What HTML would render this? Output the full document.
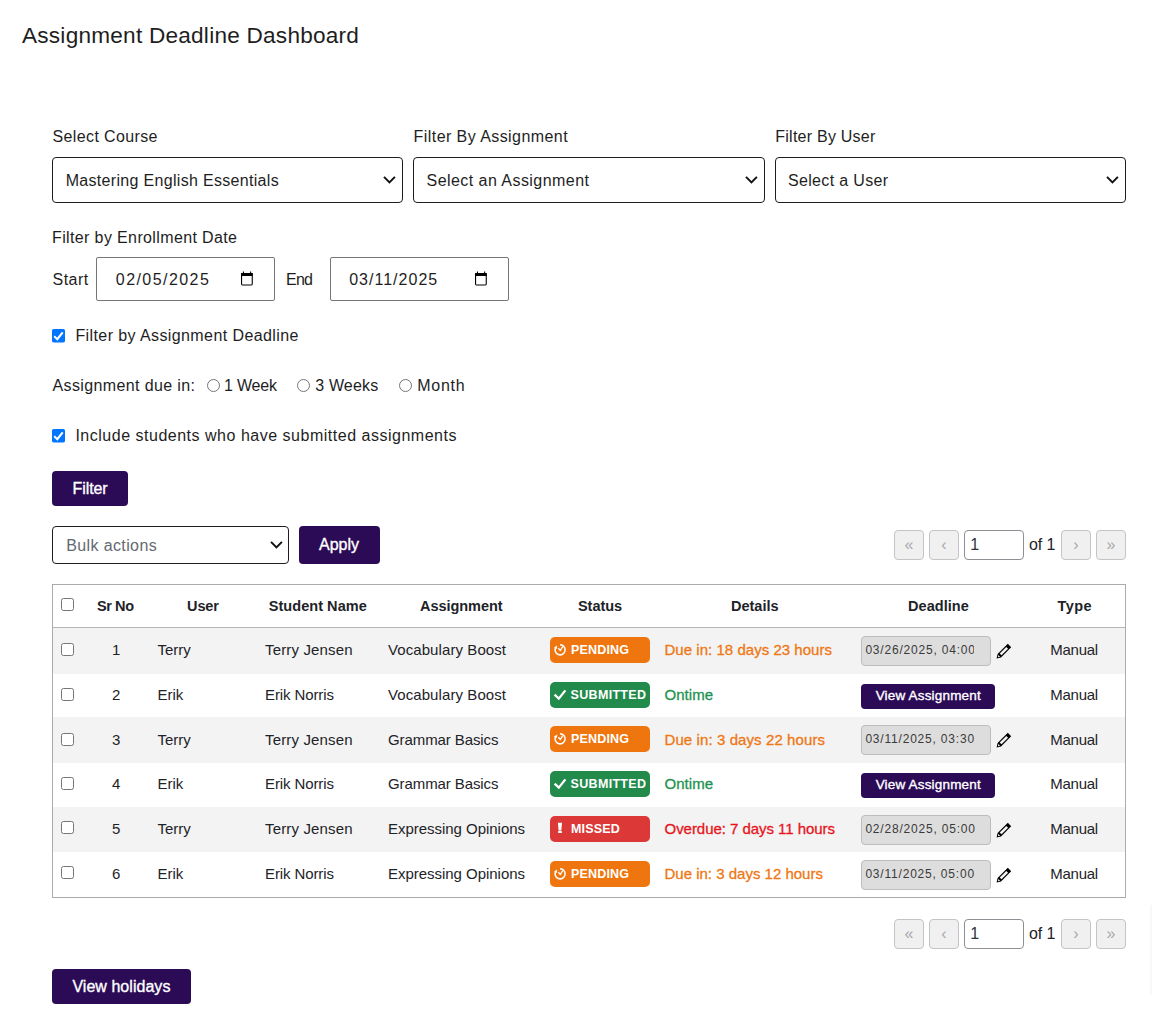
<!DOCTYPE html>
<html><head><meta charset="utf-8"><title>Assignment Deadline Dashboard</title>
<style>
html,body{margin:0;padding:0;background:#fff;}
body{width:1152px;height:1022px;position:relative;overflow:hidden;font-family:"Liberation Sans",sans-serif;}
.a{position:absolute;}
.t{position:absolute;white-space:nowrap;}
svg.a{display:block;overflow:visible;}
</style></head><body>
<div class="t" style="left:22.00px;top:22.07px;font-size:22.6px;line-height:27px;color:#1e1e1e;letter-spacing:0.236px;">Assignment Deadline Dashboard</div>
<div class="t" style="left:52.50px;top:126.96px;font-size:16px;line-height:19px;color:#1e1e1e;letter-spacing:0.376px;">Select Course</div>
<div class="t" style="left:413.60px;top:126.96px;font-size:16px;line-height:19px;color:#1e1e1e;letter-spacing:0.430px;">Filter By Assignment</div>
<div class="t" style="left:775.30px;top:126.96px;font-size:16px;line-height:19px;color:#1e1e1e;letter-spacing:0.239px;">Filter By User</div>
<div class="a" style="left:52px;top:157px;width:351px;height:46px;box-sizing:border-box;border:1px solid #1e1e1e;border-radius:4px;background:#fff;"></div>
<div class="t" style="left:65.70px;top:170.96px;font-size:16px;line-height:19px;color:#1e1e1e;letter-spacing:0.314px;">Mastering English Essentials</div>
<svg class="a" style="left:382px;top:175px" width="15" height="10" viewBox="0 0 15 10"><path d="M2 1.9 L7.45 7.35 L12.9 1.9" fill="none" stroke="#111" stroke-width="2"/></svg>
<div class="a" style="left:413px;top:157px;width:352px;height:46px;box-sizing:border-box;border:1px solid #1e1e1e;border-radius:4px;background:#fff;"></div>
<div class="t" style="left:426.50px;top:170.96px;font-size:16px;line-height:19px;color:#1e1e1e;letter-spacing:0.455px;">Select an Assignment</div>
<svg class="a" style="left:744px;top:175px" width="15" height="10" viewBox="0 0 15 10"><path d="M2 1.9 L7.45 7.35 L12.9 1.9" fill="none" stroke="#111" stroke-width="2"/></svg>
<div class="a" style="left:775px;top:157px;width:351px;height:46px;box-sizing:border-box;border:1px solid #1e1e1e;border-radius:4px;background:#fff;"></div>
<div class="t" style="left:787.90px;top:170.96px;font-size:16px;line-height:19px;color:#1e1e1e;letter-spacing:0.355px;">Select a User</div>
<svg class="a" style="left:1105px;top:175px" width="15" height="10" viewBox="0 0 15 10"><path d="M2 1.9 L7.45 7.35 L12.9 1.9" fill="none" stroke="#111" stroke-width="2"/></svg>
<div class="t" style="left:52.00px;top:227.96px;font-size:16px;line-height:19px;color:#1e1e1e;letter-spacing:0.373px;">Filter by Enrollment Date</div>
<div class="t" style="left:52.50px;top:269.96px;font-size:16px;line-height:19px;color:#1e1e1e;letter-spacing:0.478px;">Start</div>
<div class="t" style="left:286.00px;top:269.96px;font-size:16px;line-height:19px;color:#1e1e1e;letter-spacing:-0.734px;">End</div>
<div class="a" style="left:96px;top:257px;width:179px;height:44px;box-sizing:border-box;border:1px solid #767676;border-radius:2px;background:#fff;"></div>
<div class="t" style="left:115.80px;top:269.96px;font-size:16px;line-height:19px;color:#1e1e1e;letter-spacing:1.437px;">02/05/2025</div>
<svg class="a" style="left:241px;top:271px" width="13" height="15" viewBox="0 0 13 15"><rect x="0.55" y="2.6" width="10.7" height="11.4" rx="0.9" fill="none" stroke="#000" stroke-width="1.1"/><rect x="0" y="2" width="11.8" height="2.9" rx="0.6" fill="#000"/><rect x="1.9" y="0.5" width="1.1" height="2" fill="#000"/><rect x="9.1" y="0.5" width="1.1" height="2" fill="#000"/></svg>
<div class="a" style="left:330px;top:257px;width:179px;height:44px;box-sizing:border-box;border:1px solid #767676;border-radius:2px;background:#fff;"></div>
<div class="t" style="left:349.20px;top:269.96px;font-size:16px;line-height:19px;color:#1e1e1e;letter-spacing:1.013px;">03/11/2025</div>
<svg class="a" style="left:475px;top:271px" width="13" height="15" viewBox="0 0 13 15"><rect x="0.55" y="2.6" width="10.7" height="11.4" rx="0.9" fill="none" stroke="#000" stroke-width="1.1"/><rect x="0" y="2" width="11.8" height="2.9" rx="0.6" fill="#000"/><rect x="1.9" y="0.5" width="1.1" height="2" fill="#000"/><rect x="9.1" y="0.5" width="1.1" height="2" fill="#000"/></svg>
<svg class="a" style="left:52px;top:329px" width="13" height="13" viewBox="0 0 13 13"><rect x="0" y="0" width="13" height="13.4" rx="1.6" fill="#0075ff"/><path d="M2.2 7.3 L5.3 10.2 L10.7 3.3" fill="none" stroke="#fff" stroke-width="2.1"/></svg>
<div class="t" style="left:75.40px;top:325.96px;font-size:16px;line-height:19px;color:#1e1e1e;letter-spacing:0.406px;">Filter by Assignment Deadline</div>
<div class="t" style="left:52.50px;top:375.96px;font-size:16px;line-height:19px;color:#1e1e1e;letter-spacing:0.378px;">Assignment due in:</div>
<svg class="a" style="left:206.5px;top:379px" width="13" height="13" viewBox="0 0 13 13"><circle cx="6.5" cy="6.5" r="6" fill="#fff" stroke="#767676" stroke-width="1"/></svg>
<div class="t" style="left:224.00px;top:375.96px;font-size:16px;line-height:19px;color:#1e1e1e;letter-spacing:-0.200px;">1 Week</div>
<svg class="a" style="left:297px;top:379px" width="13" height="13" viewBox="0 0 13 13"><circle cx="6.5" cy="6.5" r="6" fill="#fff" stroke="#767676" stroke-width="1"/></svg>
<div class="t" style="left:315.20px;top:375.96px;font-size:16px;line-height:19px;color:#1e1e1e;letter-spacing:0.175px;">3 Weeks</div>
<svg class="a" style="left:399px;top:379px" width="13" height="13" viewBox="0 0 13 13"><circle cx="6.5" cy="6.5" r="6" fill="#fff" stroke="#767676" stroke-width="1"/></svg>
<div class="t" style="left:417.30px;top:375.96px;font-size:16px;line-height:19px;color:#1e1e1e;letter-spacing:0.734px;">Month</div>
<svg class="a" style="left:52px;top:429px" width="13" height="13" viewBox="0 0 13 13"><rect x="0" y="0" width="13" height="13.4" rx="1.6" fill="#0075ff"/><path d="M2.2 7.3 L5.3 10.2 L10.7 3.3" fill="none" stroke="#fff" stroke-width="2.1"/></svg>
<div class="t" style="left:75.40px;top:425.96px;font-size:16px;line-height:19px;color:#1e1e1e;letter-spacing:0.511px;">Include students who have submitted assignments</div>
<div class="a" style="left:52px;top:471px;width:76px;height:35px;background:#2b0a56;border-radius:4px;"></div>
<div class="t" style="left:72.60px;top:478.96px;font-size:16px;line-height:19px;color:#fff;letter-spacing:-0.111px;-webkit-text-stroke:0.35px currentColor;">Filter</div>
<div class="a" style="left:52px;top:526px;width:237px;height:38px;box-sizing:border-box;border:1px solid #1e1e1e;border-radius:4px;background:#fff;"></div>
<div class="t" style="left:66.20px;top:535.66px;font-size:16px;line-height:19px;color:#646970;letter-spacing:0.385px;">Bulk actions</div>
<svg class="a" style="left:269px;top:540px" width="15" height="10" viewBox="0 0 15 10"><path d="M2 1.9 L7.45 7.35 L12.9 1.9" fill="none" stroke="#111" stroke-width="2"/></svg>
<div class="a" style="left:299px;top:526px;width:81px;height:38px;background:#2b0a56;border-radius:4px;"></div>
<div class="t" style="left:319.00px;top:535.16px;font-size:16px;line-height:19px;color:#fff;letter-spacing:-0.006px;-webkit-text-stroke:0.35px currentColor;">Apply</div>
<div class="a" style="left:894px;top:530px;width:30px;height:30px;box-sizing:border-box;border:1px solid #c3c4c7;border-radius:4px;background:#f0f0f1;"></div>
<div class="a" style="left:894px;top:530px;width:30px;height:30px;line-height:30px;text-align:center;font-size:16px;color:#a7aaad;">&laquo;</div>
<div class="a" style="left:929px;top:530px;width:30px;height:30px;box-sizing:border-box;border:1px solid #c3c4c7;border-radius:4px;background:#f0f0f1;"></div>
<div class="a" style="left:929px;top:530px;width:30px;height:30px;line-height:30px;text-align:center;font-size:16px;color:#a7aaad;">&lsaquo;</div>
<div class="a" style="left:1061px;top:530px;width:30px;height:30px;box-sizing:border-box;border:1px solid #c3c4c7;border-radius:4px;background:#f0f0f1;"></div>
<div class="a" style="left:1061px;top:530px;width:30px;height:30px;line-height:30px;text-align:center;font-size:16px;color:#a7aaad;">&rsaquo;</div>
<div class="a" style="left:1096px;top:530px;width:30px;height:30px;box-sizing:border-box;border:1px solid #c3c4c7;border-radius:4px;background:#f0f0f1;"></div>
<div class="a" style="left:1096px;top:530px;width:30px;height:30px;line-height:30px;text-align:center;font-size:16px;color:#a7aaad;">&raquo;</div>
<div class="a" style="left:964px;top:530px;width:60px;height:30px;box-sizing:border-box;border:1px solid #8c8f94;border-radius:4px;background:#fff;"></div>
<div class="t" style="left:970.30px;top:534.96px;font-size:16px;line-height:19px;color:#2c3338;">1</div>
<div class="t" style="left:1029.00px;top:534.96px;font-size:16px;line-height:19px;color:#1d2327;letter-spacing:-0.100px;">of 1</div>
<div class="a" style="left:52px;top:584px;width:1074px;height:314px;box-sizing:border-box;border:1px solid #ababab;background:#fff;"></div>
<div class="a" style="left:53px;top:627px;width:1072px;height:1px;background:#b5b5b5;"></div>
<svg class="a" style="left:61px;top:598px" width="13" height="13" viewBox="0 0 13 13"><rect x="0.5" y="0.5" width="12" height="12" rx="2" fill="#fff" stroke="#767676" stroke-width="1"/></svg>
<div class="t" style="left:97.00px;top:598.18px;font-size:14.5px;line-height:17px;color:#1d2327;font-weight:700;letter-spacing:-0.418px;">Sr No</div>
<div class="t" style="left:187.00px;top:598.18px;font-size:14.5px;line-height:17px;color:#1d2327;font-weight:700;letter-spacing:-0.081px;">User</div>
<div class="t" style="left:268.75px;top:598.18px;font-size:14.5px;line-height:17px;color:#1d2327;font-weight:700;letter-spacing:0.047px;">Student Name</div>
<div class="t" style="left:420.00px;top:598.18px;font-size:14.5px;line-height:17px;color:#1d2327;font-weight:700;letter-spacing:-0.042px;">Assignment</div>
<div class="t" style="left:578.00px;top:598.18px;font-size:14.5px;line-height:17px;color:#1d2327;font-weight:700;letter-spacing:-0.062px;">Status</div>
<div class="t" style="left:731.00px;top:598.18px;font-size:14.5px;line-height:17px;color:#1d2327;font-weight:700;letter-spacing:-0.008px;">Details</div>
<div class="t" style="left:908.00px;top:598.18px;font-size:14.5px;line-height:17px;color:#1d2327;font-weight:700;letter-spacing:0.053px;">Deadline</div>
<div class="t" style="left:1057.50px;top:598.18px;font-size:14.5px;line-height:17px;color:#1d2327;font-weight:700;letter-spacing:0.412px;">Type</div>
<div class="a" style="left:53px;top:628px;width:1072px;height:46px;background:#f3f3f3;"></div>
<svg class="a" style="left:61px;top:643px" width="13" height="13" viewBox="0 0 13 13"><rect x="0.5" y="0.5" width="12" height="12" rx="2" fill="#fff" stroke="#767676" stroke-width="1"/></svg>
<div class="t" style="left:112.00px;top:641.40px;font-size:15px;line-height:18px;color:#1d2327;">1</div>
<div class="t" style="left:157.50px;top:641.40px;font-size:15px;line-height:18px;color:#1d2327;">Terry</div>
<div class="t" style="left:265.00px;top:641.40px;font-size:15px;line-height:18px;color:#1d2327;letter-spacing:0.149px;">Terry Jensen</div>
<div class="t" style="left:388.00px;top:641.40px;font-size:15px;line-height:18px;color:#1d2327;letter-spacing:0.084px;">Vocabulary Boost</div>
<div class="a" style="left:550px;top:637px;width:100px;height:26px;background:#ef750f;border-radius:5px;"></div>
<svg class="a" style="left:550px;top:637px" width="20" height="26" viewBox="0 0 20 26"><path d="M10 7.75 A5.05 5.05 0 1 1 5.9 10.0" fill="none" stroke="#fff" stroke-width="1.5"/><path d="M4.0 10.5 L7.3 8.6 L6.8 12.0 Z" fill="#fff"/><path d="M8.3 11.3 L10.3 13.4 L12.8 9.6" fill="none" stroke="#fff" stroke-width="1.3"/></svg>
<div class="t" style="left:571.00px;top:643.27px;font-size:12.5px;line-height:15px;color:#fff;font-weight:700;letter-spacing:0.174px;">PENDING</div>
<div class="t" style="left:664.50px;top:641.40px;font-size:15px;line-height:18px;color:#ef7714;letter-spacing:0.032px;-webkit-text-stroke:0.3px currentColor;">Due in: 18 days 23 hours</div>
<div class="a" style="left:861px;top:636px;width:130px;height:30px;box-sizing:border-box;border:1px solid #bdbdbd;border-radius:4px;background:#dddddd;"></div>
<div class="t" style="left:865.40px;top:642.84px;font-size:12px;line-height:14px;color:#3a3a3a;letter-spacing:0.800px;width:108.6px;overflow:hidden;">03/26/2025, 04:00</div>
<svg class="a" style="left:995.5px;top:643px" width="16" height="16" viewBox="0 0 16 16"><path d="M11.8 0.8 L15.2 4.2 L5 14.4 L0.6 15.4 L1.6 11 Z" fill="#000"/><path d="M10.3 3.9 L12.1 5.7 L5.5 12.3 L3.7 10.5 Z" fill="#f3f3f3"/><path d="M2.3 11.9 L4.1 13.7 L1.9 14.2 Z" fill="#f3f3f3"/></svg>
<div class="t" style="left:1050.20px;top:641.40px;font-size:15px;line-height:18px;color:#1d2327;letter-spacing:-0.239px;">Manual</div>
<svg class="a" style="left:61px;top:688px" width="13" height="13" viewBox="0 0 13 13"><rect x="0.5" y="0.5" width="12" height="12" rx="2" fill="#fff" stroke="#767676" stroke-width="1"/></svg>
<div class="t" style="left:112.00px;top:686.10px;font-size:15px;line-height:18px;color:#1d2327;">2</div>
<div class="t" style="left:157.50px;top:686.10px;font-size:15px;line-height:18px;color:#1d2327;">Erik</div>
<div class="t" style="left:265.00px;top:686.10px;font-size:15px;line-height:18px;color:#1d2327;letter-spacing:-0.100px;">Erik Norris</div>
<div class="t" style="left:388.00px;top:686.10px;font-size:15px;line-height:18px;color:#1d2327;letter-spacing:0.084px;">Vocabulary Boost</div>
<div class="a" style="left:550px;top:682px;width:100px;height:26px;background:#228a4b;border-radius:5px;"></div>
<svg class="a" style="left:550px;top:682px" width="20" height="26" viewBox="0 0 20 26"><path d="M4.6 12.6 L8.8 16.6 L15.4 8.4" fill="none" stroke="#fff" stroke-width="2.3"/></svg>
<div class="t" style="left:570.60px;top:688.27px;font-size:12.5px;line-height:15px;color:#fff;font-weight:700;letter-spacing:0.311px;">SUBMITTED</div>
<div class="t" style="left:664.50px;top:686.10px;font-size:15px;line-height:18px;color:#23924f;letter-spacing:0.051px;-webkit-text-stroke:0.3px currentColor;">Ontime</div>
<div class="a" style="left:861px;top:684px;width:134px;height:25px;background:#2b0a56;border-radius:4px;"></div>
<div class="t" style="left:875.70px;top:687.92px;font-size:13.5px;line-height:16px;color:#fff;letter-spacing:0.175px;-webkit-text-stroke:0.35px currentColor;">View Assignment</div>
<div class="t" style="left:1050.20px;top:686.10px;font-size:15px;line-height:18px;color:#1d2327;letter-spacing:-0.239px;">Manual</div>
<div class="a" style="left:53px;top:717px;width:1072px;height:46px;background:#f3f3f3;"></div>
<svg class="a" style="left:61px;top:733px" width="13" height="13" viewBox="0 0 13 13"><rect x="0.5" y="0.5" width="12" height="12" rx="2" fill="#fff" stroke="#767676" stroke-width="1"/></svg>
<div class="t" style="left:112.00px;top:731.40px;font-size:15px;line-height:18px;color:#1d2327;">3</div>
<div class="t" style="left:157.50px;top:731.40px;font-size:15px;line-height:18px;color:#1d2327;">Terry</div>
<div class="t" style="left:265.00px;top:731.40px;font-size:15px;line-height:18px;color:#1d2327;letter-spacing:0.149px;">Terry Jensen</div>
<div class="t" style="left:388.00px;top:731.40px;font-size:15px;line-height:18px;color:#1d2327;letter-spacing:-0.090px;">Grammar Basics</div>
<div class="a" style="left:550px;top:726px;width:100px;height:26px;background:#ef750f;border-radius:5px;"></div>
<svg class="a" style="left:550px;top:726px" width="20" height="26" viewBox="0 0 20 26"><path d="M10 7.75 A5.05 5.05 0 1 1 5.9 10.0" fill="none" stroke="#fff" stroke-width="1.5"/><path d="M4.0 10.5 L7.3 8.6 L6.8 12.0 Z" fill="#fff"/><path d="M8.3 11.3 L10.3 13.4 L12.8 9.6" fill="none" stroke="#fff" stroke-width="1.3"/></svg>
<div class="t" style="left:571.00px;top:732.27px;font-size:12.5px;line-height:15px;color:#fff;font-weight:700;letter-spacing:0.174px;">PENDING</div>
<div class="t" style="left:664.50px;top:731.40px;font-size:15px;line-height:18px;color:#ef7714;letter-spacing:0.095px;-webkit-text-stroke:0.3px currentColor;">Due in: 3 days 22 hours</div>
<div class="a" style="left:861px;top:725px;width:130px;height:30px;box-sizing:border-box;border:1px solid #bdbdbd;border-radius:4px;background:#dddddd;"></div>
<div class="t" style="left:865.40px;top:731.84px;font-size:12px;line-height:14px;color:#3a3a3a;letter-spacing:0.800px;width:112px;overflow:hidden;">03/11/2025, 03:30</div>
<svg class="a" style="left:995.5px;top:732px" width="16" height="16" viewBox="0 0 16 16"><path d="M11.8 0.8 L15.2 4.2 L5 14.4 L0.6 15.4 L1.6 11 Z" fill="#000"/><path d="M10.3 3.9 L12.1 5.7 L5.5 12.3 L3.7 10.5 Z" fill="#f3f3f3"/><path d="M2.3 11.9 L4.1 13.7 L1.9 14.2 Z" fill="#f3f3f3"/></svg>
<div class="t" style="left:1050.20px;top:731.40px;font-size:15px;line-height:18px;color:#1d2327;letter-spacing:-0.239px;">Manual</div>
<svg class="a" style="left:61px;top:777px" width="13" height="13" viewBox="0 0 13 13"><rect x="0.5" y="0.5" width="12" height="12" rx="2" fill="#fff" stroke="#767676" stroke-width="1"/></svg>
<div class="t" style="left:112.00px;top:775.10px;font-size:15px;line-height:18px;color:#1d2327;">4</div>
<div class="t" style="left:157.50px;top:775.10px;font-size:15px;line-height:18px;color:#1d2327;">Erik</div>
<div class="t" style="left:265.00px;top:775.10px;font-size:15px;line-height:18px;color:#1d2327;letter-spacing:-0.100px;">Erik Norris</div>
<div class="t" style="left:388.00px;top:775.10px;font-size:15px;line-height:18px;color:#1d2327;letter-spacing:-0.090px;">Grammar Basics</div>
<div class="a" style="left:550px;top:771px;width:100px;height:26px;background:#228a4b;border-radius:5px;"></div>
<svg class="a" style="left:550px;top:771px" width="20" height="26" viewBox="0 0 20 26"><path d="M4.6 12.6 L8.8 16.6 L15.4 8.4" fill="none" stroke="#fff" stroke-width="2.3"/></svg>
<div class="t" style="left:570.60px;top:777.27px;font-size:12.5px;line-height:15px;color:#fff;font-weight:700;letter-spacing:0.311px;">SUBMITTED</div>
<div class="t" style="left:664.50px;top:775.10px;font-size:15px;line-height:18px;color:#23924f;letter-spacing:0.051px;-webkit-text-stroke:0.3px currentColor;">Ontime</div>
<div class="a" style="left:861px;top:773px;width:134px;height:25px;background:#2b0a56;border-radius:4px;"></div>
<div class="t" style="left:875.70px;top:776.92px;font-size:13.5px;line-height:16px;color:#fff;letter-spacing:0.175px;-webkit-text-stroke:0.35px currentColor;">View Assignment</div>
<div class="t" style="left:1050.20px;top:775.10px;font-size:15px;line-height:18px;color:#1d2327;letter-spacing:-0.239px;">Manual</div>
<div class="a" style="left:53px;top:807px;width:1072px;height:45px;background:#f3f3f3;"></div>
<svg class="a" style="left:61px;top:821px" width="13" height="13" viewBox="0 0 13 13"><rect x="0.5" y="0.5" width="12" height="12" rx="2" fill="#fff" stroke="#767676" stroke-width="1"/></svg>
<div class="t" style="left:112.00px;top:819.60px;font-size:15px;line-height:18px;color:#1d2327;">5</div>
<div class="t" style="left:157.50px;top:819.60px;font-size:15px;line-height:18px;color:#1d2327;">Terry</div>
<div class="t" style="left:265.00px;top:819.60px;font-size:15px;line-height:18px;color:#1d2327;letter-spacing:0.149px;">Terry Jensen</div>
<div class="t" style="left:388.00px;top:819.60px;font-size:15px;line-height:18px;color:#1d2327;letter-spacing:-0.031px;">Expressing Opinions</div>
<div class="a" style="left:550px;top:816px;width:100px;height:26px;background:#dc3838;border-radius:5px;"></div>
<svg class="a" style="left:550px;top:816px" width="20" height="26" viewBox="0 0 20 26"><path d="M7.9 6.8 H12.0 L11.3 14.6 H8.6 Z" fill="#fff"/><rect x="8.1" y="15.1" width="3.8" height="1.9" rx="0.5" fill="#fff"/></svg>
<div class="t" style="left:571.00px;top:822.27px;font-size:12.5px;line-height:15px;color:#fff;font-weight:700;letter-spacing:0.155px;">MISSED</div>
<div class="t" style="left:664.50px;top:819.60px;font-size:15px;line-height:18px;color:#e8141c;letter-spacing:-0.042px;-webkit-text-stroke:0.3px currentColor;">Overdue: 7 days 11 hours</div>
<div class="a" style="left:861px;top:815px;width:130px;height:30px;box-sizing:border-box;border:1px solid #bdbdbd;border-radius:4px;background:#dddddd;"></div>
<div class="t" style="left:865.40px;top:821.84px;font-size:12px;line-height:14px;color:#3a3a3a;letter-spacing:0.800px;width:112px;overflow:hidden;">02/28/2025, 05:00</div>
<svg class="a" style="left:995.5px;top:822px" width="16" height="16" viewBox="0 0 16 16"><path d="M11.8 0.8 L15.2 4.2 L5 14.4 L0.6 15.4 L1.6 11 Z" fill="#000"/><path d="M10.3 3.9 L12.1 5.7 L5.5 12.3 L3.7 10.5 Z" fill="#f3f3f3"/><path d="M2.3 11.9 L4.1 13.7 L1.9 14.2 Z" fill="#f3f3f3"/></svg>
<div class="t" style="left:1050.20px;top:819.60px;font-size:15px;line-height:18px;color:#1d2327;letter-spacing:-0.239px;">Manual</div>
<svg class="a" style="left:61px;top:866px" width="13" height="13" viewBox="0 0 13 13"><rect x="0.5" y="0.5" width="12" height="12" rx="2" fill="#fff" stroke="#767676" stroke-width="1"/></svg>
<div class="t" style="left:112.00px;top:864.80px;font-size:15px;line-height:18px;color:#1d2327;">6</div>
<div class="t" style="left:157.50px;top:864.80px;font-size:15px;line-height:18px;color:#1d2327;">Erik</div>
<div class="t" style="left:265.00px;top:864.80px;font-size:15px;line-height:18px;color:#1d2327;letter-spacing:-0.100px;">Erik Norris</div>
<div class="t" style="left:388.00px;top:864.80px;font-size:15px;line-height:18px;color:#1d2327;letter-spacing:-0.031px;">Expressing Opinions</div>
<div class="a" style="left:550px;top:861px;width:100px;height:26px;background:#ef750f;border-radius:5px;"></div>
<svg class="a" style="left:550px;top:861px" width="20" height="26" viewBox="0 0 20 26"><path d="M10 7.75 A5.05 5.05 0 1 1 5.9 10.0" fill="none" stroke="#fff" stroke-width="1.5"/><path d="M4.0 10.5 L7.3 8.6 L6.8 12.0 Z" fill="#fff"/><path d="M8.3 11.3 L10.3 13.4 L12.8 9.6" fill="none" stroke="#fff" stroke-width="1.3"/></svg>
<div class="t" style="left:571.00px;top:867.27px;font-size:12.5px;line-height:15px;color:#fff;font-weight:700;letter-spacing:0.174px;">PENDING</div>
<div class="t" style="left:664.50px;top:864.80px;font-size:15px;line-height:18px;color:#ef7714;-webkit-text-stroke:0.3px currentColor;">Due in: 3 days 12 hours</div>
<div class="a" style="left:861px;top:860px;width:130px;height:30px;box-sizing:border-box;border:1px solid #bdbdbd;border-radius:4px;background:#dddddd;"></div>
<div class="t" style="left:865.40px;top:866.84px;font-size:12px;line-height:14px;color:#3a3a3a;letter-spacing:0.800px;width:112px;overflow:hidden;">03/11/2025, 05:00</div>
<svg class="a" style="left:995.5px;top:867px" width="16" height="16" viewBox="0 0 16 16"><path d="M11.8 0.8 L15.2 4.2 L5 14.4 L0.6 15.4 L1.6 11 Z" fill="#000"/><path d="M10.3 3.9 L12.1 5.7 L5.5 12.3 L3.7 10.5 Z" fill="#f3f3f3"/><path d="M2.3 11.9 L4.1 13.7 L1.9 14.2 Z" fill="#f3f3f3"/></svg>
<div class="t" style="left:1050.20px;top:864.80px;font-size:15px;line-height:18px;color:#1d2327;letter-spacing:-0.239px;">Manual</div>
<div class="a" style="left:894px;top:919px;width:30px;height:30px;box-sizing:border-box;border:1px solid #c3c4c7;border-radius:4px;background:#f0f0f1;"></div>
<div class="a" style="left:894px;top:919px;width:30px;height:30px;line-height:30px;text-align:center;font-size:16px;color:#a7aaad;">&laquo;</div>
<div class="a" style="left:929px;top:919px;width:30px;height:30px;box-sizing:border-box;border:1px solid #c3c4c7;border-radius:4px;background:#f0f0f1;"></div>
<div class="a" style="left:929px;top:919px;width:30px;height:30px;line-height:30px;text-align:center;font-size:16px;color:#a7aaad;">&lsaquo;</div>
<div class="a" style="left:1061px;top:919px;width:30px;height:30px;box-sizing:border-box;border:1px solid #c3c4c7;border-radius:4px;background:#f0f0f1;"></div>
<div class="a" style="left:1061px;top:919px;width:30px;height:30px;line-height:30px;text-align:center;font-size:16px;color:#a7aaad;">&rsaquo;</div>
<div class="a" style="left:1096px;top:919px;width:30px;height:30px;box-sizing:border-box;border:1px solid #c3c4c7;border-radius:4px;background:#f0f0f1;"></div>
<div class="a" style="left:1096px;top:919px;width:30px;height:30px;line-height:30px;text-align:center;font-size:16px;color:#a7aaad;">&raquo;</div>
<div class="a" style="left:964px;top:919px;width:60px;height:30px;box-sizing:border-box;border:1px solid #8c8f94;border-radius:4px;background:#fff;"></div>
<div class="t" style="left:970.30px;top:923.96px;font-size:16px;line-height:19px;color:#2c3338;">1</div>
<div class="t" style="left:1029.00px;top:923.96px;font-size:16px;line-height:19px;color:#1d2327;letter-spacing:-0.100px;">of 1</div>
<div class="a" style="left:1149.5px;top:905px;width:2px;height:90px;background:#f8f8f8;"></div>
<div class="a" style="left:52px;top:969px;width:139px;height:35px;background:#2b0a56;border-radius:4px;"></div>
<div class="t" style="left:72.40px;top:976.96px;font-size:16px;line-height:19px;color:#fff;letter-spacing:0.039px;-webkit-text-stroke:0.35px currentColor;">View holidays</div>
</body></html>
